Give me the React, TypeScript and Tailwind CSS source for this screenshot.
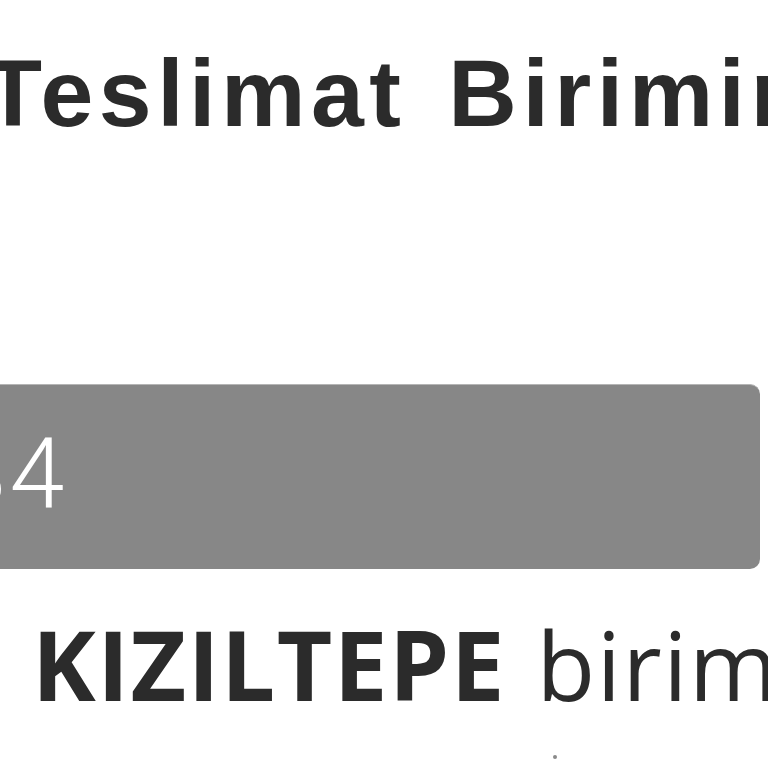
export default function App() {
  return (
    <div className="relative h-[768px] w-[768px] overflow-hidden bg-white text-[#2b2b2b]">
      <div className="flex flex-col">
        <h1
          className="ml-[-16px] whitespace-nowrap pt-[45px] text-[95px] font-bold leading-[96px] tracking-[5.5px] [word-spacing:10px]"
          style={{ fontFamily: '"Liberation Sans", Arial, sans-serif' }}
        >
          Teslimat Biriminiz
        </h1>

        <div className="ml-[-60px] mr-[8px] mt-[243px] h-[185px] rounded-[10px] border-t border-[#b5b5b5] bg-[#878787] pl-[12px] pt-[40px]">
          <span
            className="whitespace-nowrap text-[99px] font-light leading-none tracking-[2.5px] text-white"
            style={{ fontFamily: 'Roboto, "Noto Sans", sans-serif' }}
          >
            34
          </span>
        </div>

        <p
          className="ml-[32px] mt-[47px] whitespace-nowrap text-[96px] leading-none tracking-[1.5px] [word-spacing:4px]"
          style={{ fontFamily: '"Open Sans", "Noto Sans", sans-serif' }}
        >
          <span className="font-bold">KIZILTEPE</span> birimine
        </p>
      </div>
      <span className="absolute left-[553px] top-[755px] h-[4px] w-[4px] rounded-full bg-[#8a8a8a]" />
    </div>
  );
}
